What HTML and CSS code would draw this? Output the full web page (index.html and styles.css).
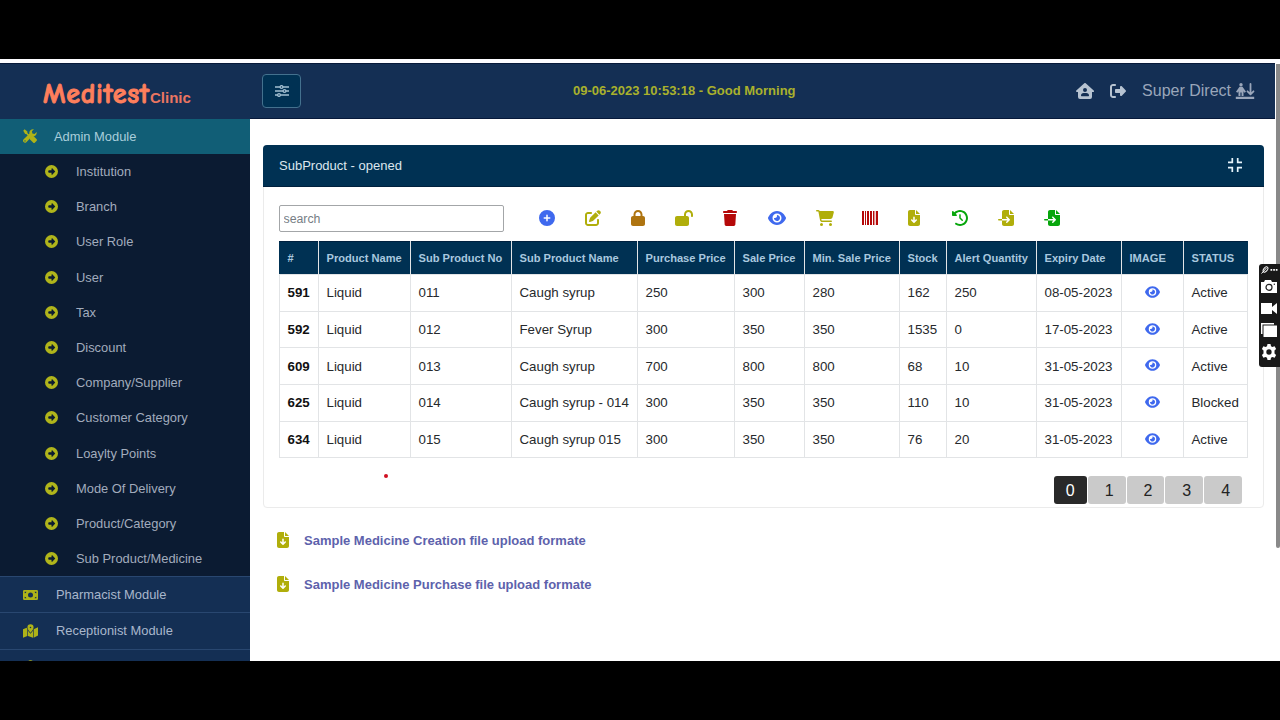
FILE: index.html
```html
<!DOCTYPE html>
<html lang="en">
<head>
<meta charset="utf-8">
<title>Meditest Clinic</title>
<link rel="stylesheet" href="styles.css">
</head>
<body>
<svg class="sprite" aria-hidden="true">
  <symbol id="go" viewBox="0 0 512 512"><path d="M0 256a256 256 0 1 0 512 0A256 256 0 1 0 0 256zM294.600 135.100l99.900 107.100c3.500 3.800 5.500 8.700 5.500 13.800s-2 10.100-5.500 13.800L294.600 376.900c-4.200 4.500-10.100 7.100-16.300 7.100C266 384 256 374 256 361.700l0-57.700-96 0c-17.700 0-32-14.300-32-32l0-32c0-17.700 14.300-32 32-32l96 0 0-57.700c0-12.300 10-22.300 22.300-22.300c6.200 0 12.100 2.600 16.300 7.100z"/></symbol>
  <symbol id="plus" viewBox="0 0 512 512"><path d="M256 512A256 256 0 1 0 256 0a256 256 0 1 0 0 512zM232 344V280H168c-13.300 0-24-10.700-24-24s10.700-24 24-24h64V168c0-13.300 10.700-24 24-24s24 10.700 24 24v64h64c13.300 0 24 10.700 24 24s-10.700 24-24 24H280v64c0 13.300-10.700 24-24 24s-24-10.700-24-24z"/></symbol>
  <symbol id="edit" viewBox="0 0 512 512"><path d="M471.600 21.700c-21.900-21.900-57.300-21.900-79.200 0L362.300 51.700l97.900 97.900 30.100-30.100c21.900-21.900 21.900-57.300 0-79.200L471.600 21.700zm-299.200 220c-6.100 6.100-10.800 13.600-13.500 21.900l-29.600 88.800c-2.900 8.600-.6 18.100 5.800 24.600s15.900 8.700 24.600 5.800l88.800-29.600c8.200-2.700 15.700-7.400 21.900-13.500L437.700 172.300 339.700 74.300 172.400 241.700zM96 64C43 64 0 107 0 160V416c0 53 43 96 96 96H352c53 0 96-43 96-96V320c0-17.700-14.300-32-32-32s-32 14.300-32 32v96c0 17.700-14.300 32-32 32H96c-17.700 0-32-14.300-32-32V160c0-17.700 14.300-32 32-32h96c17.700 0 32-14.300 32-32s-14.300-32-32-32H96z"/></symbol>
  <symbol id="lock" viewBox="0 0 448 512"><path d="M144 144v48H304V144c0-44.200-35.800-80-80-80s-80 35.800-80 80zM80 192V144C80 64.500 144.500 0 224 0s144 64.500 144 144v48h16c35.300 0 64 28.700 64 64V448c0 35.300-28.700 64-64 64H64c-35.300 0-64-28.700-64-64V256c0-35.300 28.700-64 64-64H80z"/></symbol>
  <symbol id="unlock" viewBox="0 0 576 512"><path d="M352 144c0-44.200 35.800-80 80-80s80 35.800 80 80v48c0 17.700 14.300 32 32 32s32-14.300 32-32V144C576 64.500 511.500 0 432 0S288 64.500 288 144v48H64c-35.300 0-64 28.700-64 64V448c0 35.300 28.700 64 64 64H384c35.300 0 64-28.700 64-64V256c0-35.300-28.700-64-64-64H352V144z"/></symbol>
  <symbol id="trash" viewBox="0 0 448 512"><path d="M135.200 17.700L128 32H32C14.300 32 0 46.300 0 64S14.300 96 32 96H416c17.700 0 32-14.300 32-32s-14.300-32-32-32H320l-7.200-14.300C307.400 6.800 296.300 0 284.200 0H163.800c-12.100 0-23.200 6.800-28.600 17.700zM416 128H32L53.200 467c1.600 25.300 22.600 45 47.900 45H346.900c25.300 0 46.300-19.700 47.900-45L416 128z"/></symbol>
  <symbol id="eye" viewBox="0 0 576 512"><path d="M288 32c-80.800 0-145.500 36.800-192.600 80.600C48.600 156 17.300 208 2.500 243.700c-3.300 7.900-3.300 16.700 0 24.600C17.300 304 48.600 356 95.400 399.400C142.500 443.200 207.200 480 288 480s145.500-36.800 192.600-80.600c46.800-43.500 78.100-95.400 93-131.100c3.300-7.900 3.300-16.700 0-24.600c-14.900-35.700-46.200-87.700-93-131.100C433.500 68.800 368.800 32 288 32zM144 256a144 144 0 1 1 288 0 144 144 0 1 1 -288 0zm144-64c0 35.300-28.700 64-64 64c-7.100 0-13.900-1.200-20.300-3.300c-5.500-1.800-11.900 1.600-11.700 7.400c.3 6.900 1.300 13.800 3.200 20.700c13.700 51.200 66.400 81.600 117.600 67.900s81.600-66.400 67.900-117.600c-11.100-41.500-47.800-69.400-88.600-71.100c-5.800-.2-9.200 6.100-7.400 11.700c2.100 6.400 3.300 13.200 3.300 20.300z"/></symbol>
  <symbol id="cart" viewBox="0 0 576 512"><path d="M0 24C0 10.700 10.700 0 24 0H69.500c22 0 41.500 12.800 50.600 32h411c26.300 0 45.500 25 38.600 50.400l-41 152.300c-8.500 31.400-37 53.300-69.500 53.300H170.700l5.400 28.500c2.200 11.300 12.100 19.500 23.600 19.500H488c13.300 0 24 10.700 24 24s-10.700 24-24 24H199.700c-34.600 0-64.300-24.600-70.700-58.500L77.400 54.500c-.7-3.800-4-6.500-7.900-6.500H24C10.700 48 0 37.300 0 24zM128 464a48 48 0 1 1 96 0 48 48 0 1 1 -96 0zm336-48a48 48 0 1 1 0 96 48 48 0 1 1 0-96z"/></symbol>
  <symbol id="barcode" viewBox="0 0 512 512"><path d="M0 32h64v448H0zM96 32h32v448H96zM160 32h64v448h-64zM256 32h64v448h-64zM352 32h32v448h-32zM448 32h64v448h-64zM402 32h20v448h-20z"/></symbol>
  <symbol id="download" viewBox="0 0 384 512"><path d="M64 0C28.700 0 0 28.700 0 64V448c0 35.300 28.700 64 64 64H320c35.300 0 64-28.700 64-64V160H256c-17.700 0-32-14.300-32-32V0H64zM256 0V128H384L256 0zM216 232V334.100l31-31c9.400-9.400 24.600-9.400 33.900 0s9.400 24.600 0 33.900l-72 72c-9.400 9.400-24.600 9.400-33.900 0l-72-72c-9.400-9.400-9.400-24.600 0-33.900s24.600-9.400 33.900 0l31 31V232c0-13.300 10.700-24 24-24s24 10.700 24 24z"/></symbol>
  <symbol id="history" viewBox="0 0 512 512"><path d="M75 75L41 41C25.900 25.900 0 36.600 0 57.900V168c0 13.300 10.700 24 24 24H134.100c21.400 0 32.100-25.900 17-41l-30.800-30.800C155 85.500 203 64 256 64c106 0 192 86 192 192s-86 192-192 192c-40.800 0-78.600-12.700-109.700-34.400c-14.500-10.100-34.400-6.600-44.600 7.900s-6.600 34.400 7.900 44.600C151.200 495 201.700 512 256 512c141.400 0 256-114.600 256-256S397.400 0 256 0C185.300 0 121.300 28.700 75 75zm181 53c-13.300 0-24 10.700-24 24V256c0 6.400 2.500 12.500 7 17l72 72c9.400 9.400 24.600 9.400 33.900 0s9.400-24.600 0-33.900l-65-65V152c0-13.300-10.700-24-24-24z"/></symbol>
  <symbol id="import" viewBox="0 0 512 512"><path d="M128 64c0-35.300 28.700-64 64-64H352V128c0 17.700 14.300 32 32 32H512V448c0 35.300-28.700 64-64 64H192c-35.300 0-64-28.700-64-64V336H302.100l-39 39c-9.400 9.400-9.400 24.600 0 33.900s24.600 9.400 33.900 0l80-80c9.400-9.400 9.400-24.600 0-33.900l-80-80c-9.400-9.400-24.600-9.400-33.900 0s-9.400 24.600 0 33.900l39 39H128V64zm0 224v48H24c-13.300 0-24-10.700-24-24s10.700-24 24-24H128zM512 128H384V0L512 128z"/></symbol>
  <symbol id="logout" viewBox="0 0 512 512"><path d="M377.900 105.900L500.700 228.700c7.200 7.200 11.300 17.100 11.300 27.300s-4.100 20.100-11.300 27.300L377.900 406.100c-6.400 6.400-15 9.900-24 9.900c-18.700 0-33.900-15.200-33.900-33.900l0-62.100-128 0c-17.700 0-32-14.300-32-32l0-64c0-17.700 14.300-32 32-32l128 0 0-62.100c0-18.700 15.200-33.900 33.900-33.900c9 0 17.600 3.600 24 9.900zM160 96L96 96c-17.700 0-32 14.300-32 32l0 256c0 17.700 14.300 32 32 32l64 0c17.700 0 32 14.300 32 32s-14.300 32-32 32l-64 0c-53 0-96-43-96-96L0 128C0 75 43 32 96 32l64 0c17.700 0 32 14.300 32 32s-14.300 32-32 32z"/></symbol>
  <symbol id="home" viewBox="0 0 18 16"><path fill-rule="evenodd" d="M8.300.3a1 1 0 0 1 1.400 0L17.700 7.400C18.400 8.100 18 9 17.100 9H16v5a2 2 0 0 1-2 2H4a2 2 0 0 1-2-2V9H.9C.1 9-.4 8.100.3 7.400zM9 5a2 2 0 1 0 0 4 2 2 0 0 0 0-4zM7.700 10A2.700 2.700 0 0 0 5 12.700c0 .3.200.5.500.5h7c.3 0 .5-.2.500-.5A2.700 2.700 0 0 0 10.300 10z"/></symbol>
  <symbol id="person" viewBox="0 0 20 16"><circle cx="6" cy="1.700" r="1.700"/><path d="M4.500 3.800h3L11 8.800l-1.500 1-1-1.600V13H6.600V9.500H5.400V13H3.500V8.200l-1 1.600L1 8.800zM.8 13.800h18.400v2.200H.8z"/><path d="M15.500 1v9.800M12.500 8.300l3 3 3-3" fill="none" stroke="currentColor" stroke-width="1.800" stroke-linecap="round" stroke-linejoin="round"/></symbol>
  <symbol id="compress" viewBox="0 0 14 14"><path d="M4.300 0v4.300H0M9.700 0v4.300H14M0 9.700h4.300V14M14 9.700H9.700V14" fill="none" stroke="currentColor" stroke-width="1.700"/></symbol>
  <symbol id="sliders" viewBox="0 0 14 12"><g fill="none" stroke="currentColor" stroke-width="1.300"><path d="M0 2h5M8 2H14M0 6h8M11 6h3M0 10h2.500M5.500 10H14"/><circle cx="6.500" cy="2" r="1.400"/><circle cx="9.500" cy="6" r="1.400"/><circle cx="4" cy="10" r="1.400"/></g></symbol>
  <symbol id="tools" viewBox="0 0 16 16"><path d="M1.800.3 5 2.800v1.700l3 3L6.700 8.800l-3-3H2.500L.3 2zM9 8.300l1-.6h1.600l3.800 3.800a1.500 1.500 0 0 1 0 2.200l-1.700 1.700a1.500 1.500 0 0 1-2.200 0L7.700 11.700V10z"/><path fill-rule="evenodd" d="M15.600 3.400 13.200 5.700 10.700 5 10.200 2.700 12.500.3A4.400 4.400 0 0 0 7.300 5.500L.8 11.800a2 2 0 1 0 3 3.200l6.500-6.600a4.400 4.400 0 0 0 5.300-5zM2.300 12.800a.8.800 0 1 1 0 1.600.8.800 0 0 1 0-1.600z"/></symbol>
  <symbol id="money" viewBox="0 0 18 12"><path fill-rule="evenodd" d="M1.500 0h15A1.500 1.500 0 0 1 18 1.500v9a1.500 1.500 0 0 1-1.500 1.500h-15A1.500 1.500 0 0 1 0 10.500v-9A1.500 1.500 0 0 1 1.500 0zM2 2v2a2 2 0 0 0 2-2zM14 2a2 2 0 0 0 2 2V2zM2 8v2h2a2 2 0 0 0-2-2zM16 8a2 2 0 0 0-2 2h2zM9 3a3 3 0 1 0 0 6 3 3 0 0 0 0-6z"/></symbol>
  <symbol id="map" viewBox="0 0 18 16"><path fill-rule="evenodd" d="M9 0a3.700 3.700 0 0 1 3.700 3.700C12.700 5.500 10.500 8.300 9 10 7.500 8.300 5.300 5.500 5.300 3.700A3.700 3.700 0 0 1 9 0zm0 2.800a.9.900 0 1 0 0 1.800.9.900 0 0 0 0-1.800zM0 5.800 4.400 4 5.200 6V14l-5.200 2zM6 7.800l3 3.500 3-3.500V16l-6-2zM12.800 6 18 3.500v10L12.800 16z"/></symbol>
  <symbol id="camera" viewBox="0 0 16 13"><path d="M0 2h3L4 0h6l1 2h5v11H0z"/><circle cx="8" cy="7.300" r="3" fill="#fff" stroke="#222" stroke-width="1.200"/><circle cx="13.300" cy="4.200" r=".7" fill="#222"/></symbol>
  <symbol id="video" viewBox="0 0 16 11"><path d="M0 0h11v4l5-4v11l-5-4v4H0z"/></symbol>
  <symbol id="windows" viewBox="0 0 16 14"><path d="M0 0h13v1.500H1.500V11H0zM2.500 2.500H16V14H2.500z"/></symbol>
  <symbol id="gear" viewBox="0 0 16 16"><path fill-rule="evenodd" d="M6.500 0h3l.5 2.200 1.400.8 2.200-.7 1.500 2.600L13.500 6.500v3l1.600 1.600-1.500 2.600-2.200-.7-1.400.8-.5 2.200h-3L6 13.800 4.600 13l-2.200.7-1.500-2.600 1.600-1.600v-3L.9 4.900l1.500-2.600 2.200.7L6 2.200zM8 5.300a2.700 2.700 0 1 0 0 5.400 2.700 2.700 0 0 0 0-5.400z"/></symbol>
  <symbol id="pin" viewBox="0 0 16 8"><g fill="none" stroke="#fff"><ellipse cx="4" cy="3.500" rx="3" ry="1.800" transform="rotate(-50 4 3.500)"/><path d="M0 7.500 5 2"/></g><path d="M9 3h1.700v1.700H9zM11.700 3h1.700v1.700h-1.700zM14.300 3H16v1.700h-1.700z"/></symbol>
</svg>

<div class="frame">
  <div class="app">
    <aside class="sidebar">
      <div class="brand"><span class="brand-main">Meditest</span><span class="brand-sub">Clinic</span></div>
      <div class="module active"><svg class="i tools"><use href="#tools"/></svg><span>Admin Module</span></div>
      <ul class="submenu">
        <li><svg class="i"><use href="#go"/></svg>Institution</li>
        <li><svg class="i"><use href="#go"/></svg>Branch</li>
        <li><svg class="i"><use href="#go"/></svg>User Role</li>
        <li><svg class="i"><use href="#go"/></svg>User</li>
        <li><svg class="i"><use href="#go"/></svg>Tax</li>
        <li><svg class="i"><use href="#go"/></svg>Discount</li>
        <li><svg class="i"><use href="#go"/></svg>Company/Supplier</li>
        <li><svg class="i"><use href="#go"/></svg>Customer Category</li>
        <li><svg class="i"><use href="#go"/></svg>Loaylty Points</li>
        <li><svg class="i"><use href="#go"/></svg>Mode Of Delivery</li>
        <li><svg class="i"><use href="#go"/></svg>Product/Category</li>
        <li><svg class="i"><use href="#go"/></svg>Sub Product/Medicine</li>
      </ul>
      <div class="module"><svg class="i money"><use href="#money"/></svg><span>Pharmacist Module</span></div>
      <div class="module"><svg class="i map"><use href="#map"/></svg><span>Receptionist Module</span></div>
      <div class="module"><svg class="i map"><use href="#map"/></svg></div>
    </aside>
    <div class="main">
      <header class="topbar">
        <div class="menu-btn"><svg class="i"><use href="#sliders"/></svg></div>
        <div class="greeting">09-06-2023 10:53:18 - Good Morning</div>
        <div class="user"><svg class="i home"><use href="#home"/></svg><svg class="i logout"><use href="#logout"/></svg><span>Super Direct</span><svg class="i person"><use href="#person"/></svg></div>
      </header>
      <section class="card">
        <div class="card-head"><span>SubProduct - opened</span><svg class="i"><use href="#compress"/></svg></div>
        <div class="card-body">
          <div class="tools-row">
            <input class="search" placeholder="search">
            <div class="actions">
              <div><svg class="i w16 blue"><use href="#plus"/></svg></div>
              <div><svg class="i w16 olive"><use href="#edit"/></svg></div>
              <div><svg class="i w14 brown"><use href="#lock"/></svg></div>
              <div><svg class="i w18 olive"><use href="#unlock"/></svg></div>
              <div><svg class="i w14 red"><use href="#trash"/></svg></div>
              <div><svg class="i w18 blue"><use href="#eye"/></svg></div>
              <div><svg class="i w18 olive"><use href="#cart"/></svg></div>
              <div><svg class="i w16 red"><use href="#barcode"/></svg></div>
              <div><svg class="i w12 olive"><use href="#download"/></svg></div>
              <div><svg class="i w16 green"><use href="#history"/></svg></div>
              <div><svg class="i w16 olive"><use href="#import"/></svg></div>
              <div><svg class="i w16 green"><use href="#import"/></svg></div>
            </div>
          </div>
          <table class="grid">
            <colgroup><col class="c1"><col class="c2"><col class="c3"><col class="c4"><col class="c5"><col class="c6"><col class="c7"><col class="c8"><col class="c9"><col class="c10"><col class="c11"><col class="c12"></colgroup>
            <thead><tr><th>#</th><th>Product Name</th><th>Sub Product No</th><th>Sub Product Name</th><th>Purchase Price</th><th>Sale Price</th><th>Min. Sale Price</th><th>Stock</th><th>Alert Quantity</th><th>Expiry Date</th><th>IMAGE</th><th>STATUS</th></tr></thead>
            <tbody>
              <tr><td>591</td><td>Liquid</td><td>011</td><td>Caugh syrup</td><td>250</td><td>300</td><td>280</td><td>162</td><td>250</td><td>08-05-2023</td><td class="img"><svg class="i"><use href="#eye"/></svg></td><td>Active</td></tr>
              <tr><td>592</td><td>Liquid</td><td>012</td><td>Fever Syrup</td><td>300</td><td>350</td><td>350</td><td>1535</td><td>0</td><td>17-05-2023</td><td class="img"><svg class="i"><use href="#eye"/></svg></td><td>Active</td></tr>
              <tr><td>609</td><td>Liquid</td><td>013</td><td>Caugh syrup</td><td>700</td><td>800</td><td>800</td><td>68</td><td>10</td><td>31-05-2023</td><td class="img"><svg class="i"><use href="#eye"/></svg></td><td>Active</td></tr>
              <tr><td>625</td><td>Liquid</td><td>014</td><td>Caugh syrup - 014</td><td>300</td><td>350</td><td>350</td><td>110</td><td>10</td><td>31-05-2023</td><td class="img"><svg class="i"><use href="#eye"/></svg></td><td>Blocked</td></tr>
              <tr><td>634</td><td>Liquid</td><td>015</td><td>Caugh syrup 015</td><td>300</td><td>350</td><td>350</td><td>76</td><td>20</td><td>31-05-2023</td><td class="img"><svg class="i"><use href="#eye"/></svg></td><td>Active</td></tr>
            </tbody>
          </table>
          <div class="pager"><span class="on">0</span><span>1</span><span>2</span><span>3</span><span>4</span></div>
        </div>
      </section>
      <div class="links">
        <div><svg class="i w12 olive"><use href="#download"/></svg>Sample Medicine Creation file upload formate</div>
        <div><svg class="i w12 olive"><use href="#download"/></svg>Sample Medicine Purchase file upload formate</div>
      </div>
    </div>
  </div>
  <div class="scroll"></div>
  <div class="pointer"></div>
  <div class="recorder">
    <svg class="i r-pin"><use href="#pin"/></svg>
    <svg class="i r-cam"><use href="#camera"/></svg>
    <svg class="i r-vid"><use href="#video"/></svg>
    <svg class="i r-win"><use href="#windows"/></svg>
    <svg class="i r-gear"><use href="#gear"/></svg>
  </div>
</div>
</body>
</html>
```

FILE: styles.css
```css
* { box-sizing: border-box; }
body {
  margin: 0;
  height: 720px;
  padding-top: 59px;
  overflow: hidden;
  background: #000;
  font-family: "Liberation Sans", Arial, sans-serif;
  font-size: 13px;
}
.sprite { display: none; }
.i { display: block; flex: none; fill: currentColor; }
.frame { position: relative; height: 602px; padding-top: 4px; background: #fcfcff; overflow: hidden; }
.app { display: flex; height: 598px; }

.sidebar { width: 250px; flex: none; overflow: hidden; background: #142f54; color: #a9b7cc; }
.brand { display: flex; align-items: baseline; height: 56px; padding: 12px 0 0 43px; color: #ff7f5c; white-space: nowrap; border-top: 1px solid #07193a; }
.brand-main { font: 900 28px/36px "Comic Sans MS", "Comic Neue", Lato, sans-serif; letter-spacing: 0.700px; width: 107px; -webkit-text-stroke: 0.9px #ff7f5c; }
.brand-sub { font-size: 15px; font-weight: 700; color: #ea7561; }
.module { display: flex; align-items: center; height: 36.300px; padding-left: 23px; font-size: 12.900px; border-top: 1px solid #294770; }
.module .i { color: #aeb318; }
.module.active { height: 35px; padding: 0 0 2px 22.500px; background: #115e76; border-top-color: #115e76; color: #a9cedb; }
.tools { width: 14px; height: 14px; margin-right: 17.500px; }
.money { width: 15px; height: 10px; margin-right: 18px; }
.map { width: 15px; height: 14px; margin-right: 18px; }
.submenu { list-style: none; margin: 0; padding: 0; height: 422px; background: #0b1b32; color: #a2acbd; }
.submenu li { display: flex; align-items: center; height: 35.200px; padding-left: 45px; font-size: 12.900px; }
.submenu .i { width: 13px; height: 13px; margin-right: 18px; color: #b0b51b; }

.main { flex: 1; min-width: 0; background: #fff; }
.topbar { display: flex; align-items: center; width: 1025px; height: 56px; padding: 0 20px 0 12px; background: #142f54; border-top: 1px solid #07193a; border-bottom: 1px solid #07193a; }
.menu-btn { display: grid; place-items: center; width: 39px; height: 34px; border: 1px solid #44718e; border-radius: 4px; background: #003153; color: #a3c0d2; }
.menu-btn .i { width: 14px; height: 12px; }
.greeting { margin-left: 272px; padding-bottom: 1px; font-weight: 700; color: #a9b12c; }
.user { display: flex; align-items: center; margin-left: auto; color: #9aa6ba; font-size: 16px; }
.home { width: 18px; height: 16px; margin-right: 16px; color: #b7c3d1; }
.logout { width: 16px; height: 16px; margin-right: 16px; color: #b7c3d1; }
.person { width: 20px; height: 16px; margin-left: 4px; }

.card { width: 1001px; height: 363px; margin: 26px 0 0 12.500px; border: 1px solid #ebebeb; border-radius: 4px; }
.card-head { display: flex; align-items: center; justify-content: space-between; height: 42px; margin: -1px -1px 0; padding: 0 21.500px 1px 16.500px; border-bottom: 1px solid #00203d; border-radius: 4px 4px 0 0; background: #003153; color: #dce6ee; }
.card-head .i { width: 14px; height: 14px; color: #e6f4fb; }
.card-body { padding: 18px 0 0 15px; }
.tools-row { display: flex; align-items: center; height: 27px; }
.search { width: 225px; height: 27px; padding: 0 4px; border: 1px solid #a3a6a8; border-radius: 2px; background: #fff; font: 12.300px "Liberation Sans", sans-serif; }
.search::placeholder { color: #777e85; }
.actions { display: grid; grid-template-columns: 45.500px 45.500px 45.500px 46px 46px 48px 47px 44px 44px 47px 46px 46px; margin-left: 21px; padding-bottom: 2px; }
.actions > div { display: grid; place-items: center; }
.w12, .w14, .w16, .w18 { height: 16px; }
.w12 { width: 12px; }
.w14 { width: 14px; }
.w16 { width: 16px; }
.w18 { width: 18px; }
.blue { color: #3f69ee; }
.olive { color: #b0ae0b; }
.brown { color: #ae7410; }
.red { color: #b50909; }
.green { color: #07a60c; }

.grid { width: 968px; margin-top: 9px; table-layout: fixed; border-collapse: collapse; font-size: 13.300px; color: #26292c; }
.c1 { width: 39px; } .c2 { width: 92px; } .c3 { width: 101px; } .c4 { width: 126px; } .c5 { width: 97px; } .c6 { width: 70px; }
.c7 { width: 95px; } .c8 { width: 47px; } .c9 { width: 90px; } .c10 { width: 85px; } .c11 { width: 62px; } .c12 { width: 64px; }
.grid th, .grid td { padding: 0 0 0 8px; border: 1px solid #e2e4e6; text-align: left; white-space: nowrap; }
.grid th { height: 33px; padding-bottom: 1px; background: #003153; color: #a9c8df; font-size: 11.100px; border-top-color: #00213f; }
.grid th:first-child { border-left-color: #003153; }
.grid th:last-child { border-right-color: #003153; }
.grid td { height: 36.700px; }
.grid td:first-child { font-weight: 700; color: #111; }
.grid .img { padding: 0 0 2px; }
.img .i { width: 15px; height: 14px; margin: 0 auto; color: #3f69ee; }

.pager { display: flex; gap: 1px; margin: 18px 20.500px 0 0; justify-content: flex-end; }
.pager span { width: 37.800px; height: 28px; padding-left: 5px; border-radius: 3px; background: #cacaca; color: #222; font-size: 16px; line-height: 30px; text-align: center; }
.pager .on { width: 33px; padding: 0; background: #292929; color: #fff; }
.links { padding: 24px 0 0 27px; color: #5d62ac; font-weight: 700; }
.links div { display: flex; align-items: center; gap: 15px; height: 16px; margin-bottom: 28px; }

.scroll { position: absolute; left: 1276px; top: 5px; width: 4px; height: 484px; border-radius: 0 0 2px 2px; background: #898989; }
.pointer { position: absolute; left: 384px; top: 415px; width: 4px; height: 4px; border-radius: 50%; background: #d01022; }
.recorder { position: absolute; left: 1259px; top: 205px; display: flex; flex-direction: column; align-items: flex-start; width: 21px; height: 103px; padding: 2px 0 0 2px; border-radius: 3px 0 0 3px; background: #191919; color: #fff; }
.r-pin { width: 17px; height: 8px; margin-bottom: 6px; }
.r-cam { width: 16px; height: 13px; margin-bottom: 10px; }
.r-vid { width: 16px; height: 11px; margin-bottom: 9px; }
.r-win { width: 16px; height: 14px; margin-bottom: 7px; }
.r-gear { width: 16px; height: 16px; }
```
